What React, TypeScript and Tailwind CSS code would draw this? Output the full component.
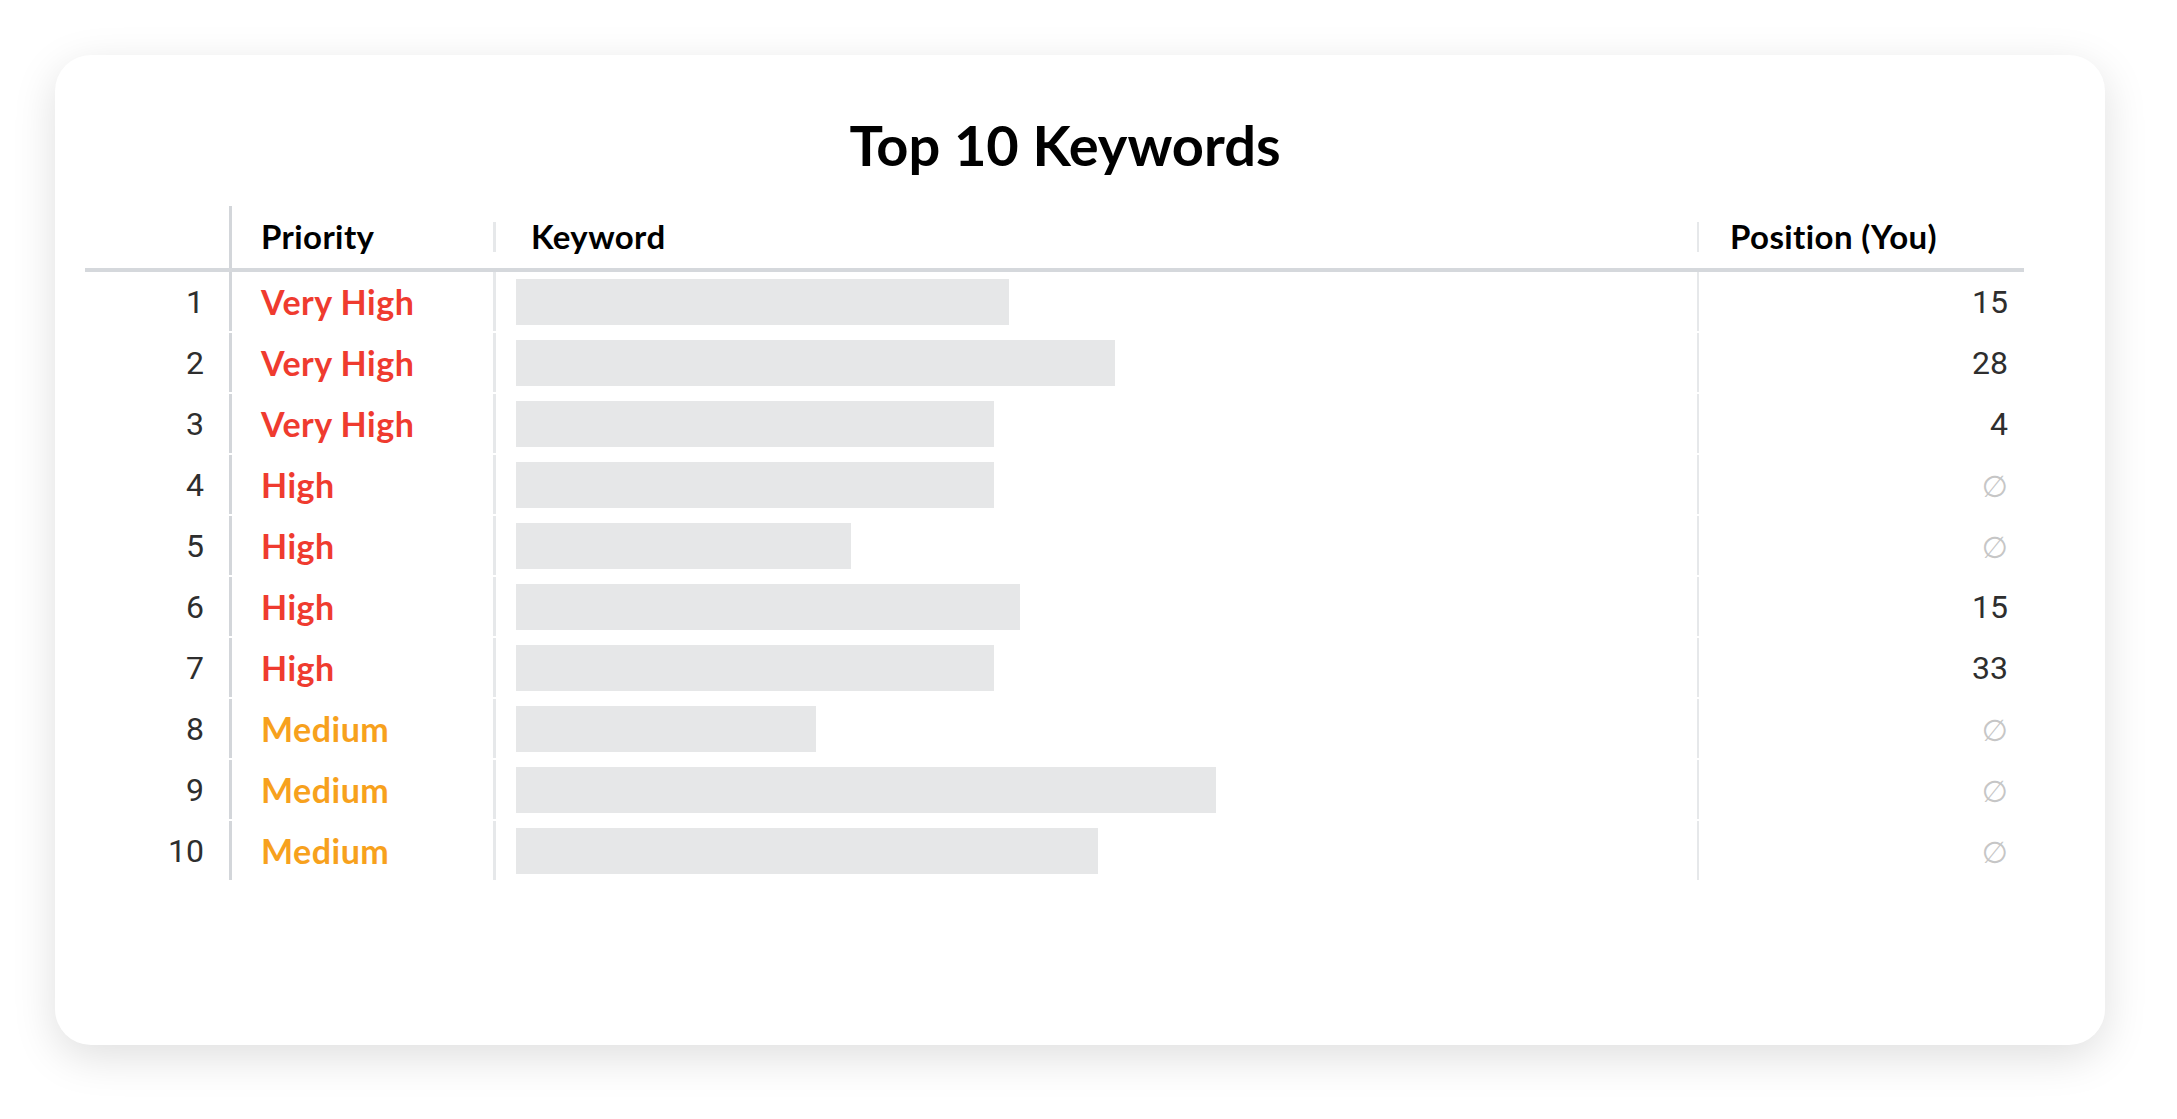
const rows = [
  { n: 1, priority: 'Very High', bar: 493, pos: '15' },
  { n: 2, priority: 'Very High', bar: 599, pos: '28' },
  { n: 3, priority: 'Very High', bar: 478, pos: '4' },
  { n: 4, priority: 'High', bar: 478, pos: null },
  { n: 5, priority: 'High', bar: 335, pos: null },
  { n: 6, priority: 'High', bar: 504, pos: '15' },
  { n: 7, priority: 'High', bar: 478, pos: '33' },
  { n: 8, priority: 'Medium', bar: 300, pos: null },
  { n: 9, priority: 'Medium', bar: 700, pos: null },
  { n: 10, priority: 'Medium', bar: 582, pos: null },
];

const priorityColor = (p: string) => (p === 'Medium' ? 'text-[#f7a11d]' : 'text-[#ef3b2f]');

export default function App() {
  return (
    <div className="h-[1119px] w-[2177px] bg-white pl-[55px] pt-[55px] font-['Lato',sans-serif]">
      <div className="h-[990px] w-[2050px] rounded-[36px] bg-white pt-[57px] shadow-[0_12px_44px_rgba(0,0,0,0.13)]">
        <h1 className="pr-[30px] text-center text-[56px] font-bold leading-[66px] text-black">Top 10 Keywords</h1>

        <div className="ml-[30px] mt-[28px] w-[1939px]">
          {/* header */}
          <div className="flex h-[66px] border-b-4 border-[#d5d8dc] text-[33px] font-bold tracking-[0.4px] text-black">
            <div className="w-[144px]" />
            <div className="flex w-[264px] items-center border-l-[3px] border-[#d3d6da] pl-[29px]">Priority</div>
            <div className="flex w-[1204px] items-center">
              <span className="h-[30px] w-[3px] bg-[#e6e8ea]" />
              <span className="ml-[35px]">Keyword</span>
            </div>
            <div className="flex flex-1 items-center">
              <span className="h-[30px] w-[2px] bg-[#e6e8ea]" />
              <span className="ml-[31px]">Position (You)</span>
            </div>
          </div>

          {rows.map((r) => (
            <div key={r.n} className="flex h-[61px] pb-[2px]">
              <div className="flex w-[144px] items-center justify-end pr-[25px] font-['Roboto',sans-serif] text-[32px] text-[#2e2e2e]">
                {r.n}
              </div>
              <div
                className={`flex w-[264px] items-center border-l-[3px] border-[#d3d6da] pl-[29px] text-[34px] font-bold tracking-[0.5px] ${priorityColor(r.priority)}`}
              >
                {r.priority}
              </div>
              <div className="flex w-[1204px] items-center border-l-[3px] border-[#e6e8ea] pl-[20px]">
                <div className="h-[46px] bg-[#e6e7e8]" style={{ width: r.bar }} />
              </div>
              <div className="flex flex-1 items-center justify-end border-l-2 border-[#e6e8ea] pr-[16px]">
                {r.pos ? (
                  <span className="font-['Roboto',sans-serif] text-[32px] text-[#2e2e2e]">{r.pos}</span>
                ) : (
                  <span className="mt-[4px] font-['DejaVu_Sans',sans-serif] text-[30px] text-[#c6c6c6]">∅</span>
                )}
              </div>
            </div>
          ))}
        </div>
      </div>
    </div>
  );
}
